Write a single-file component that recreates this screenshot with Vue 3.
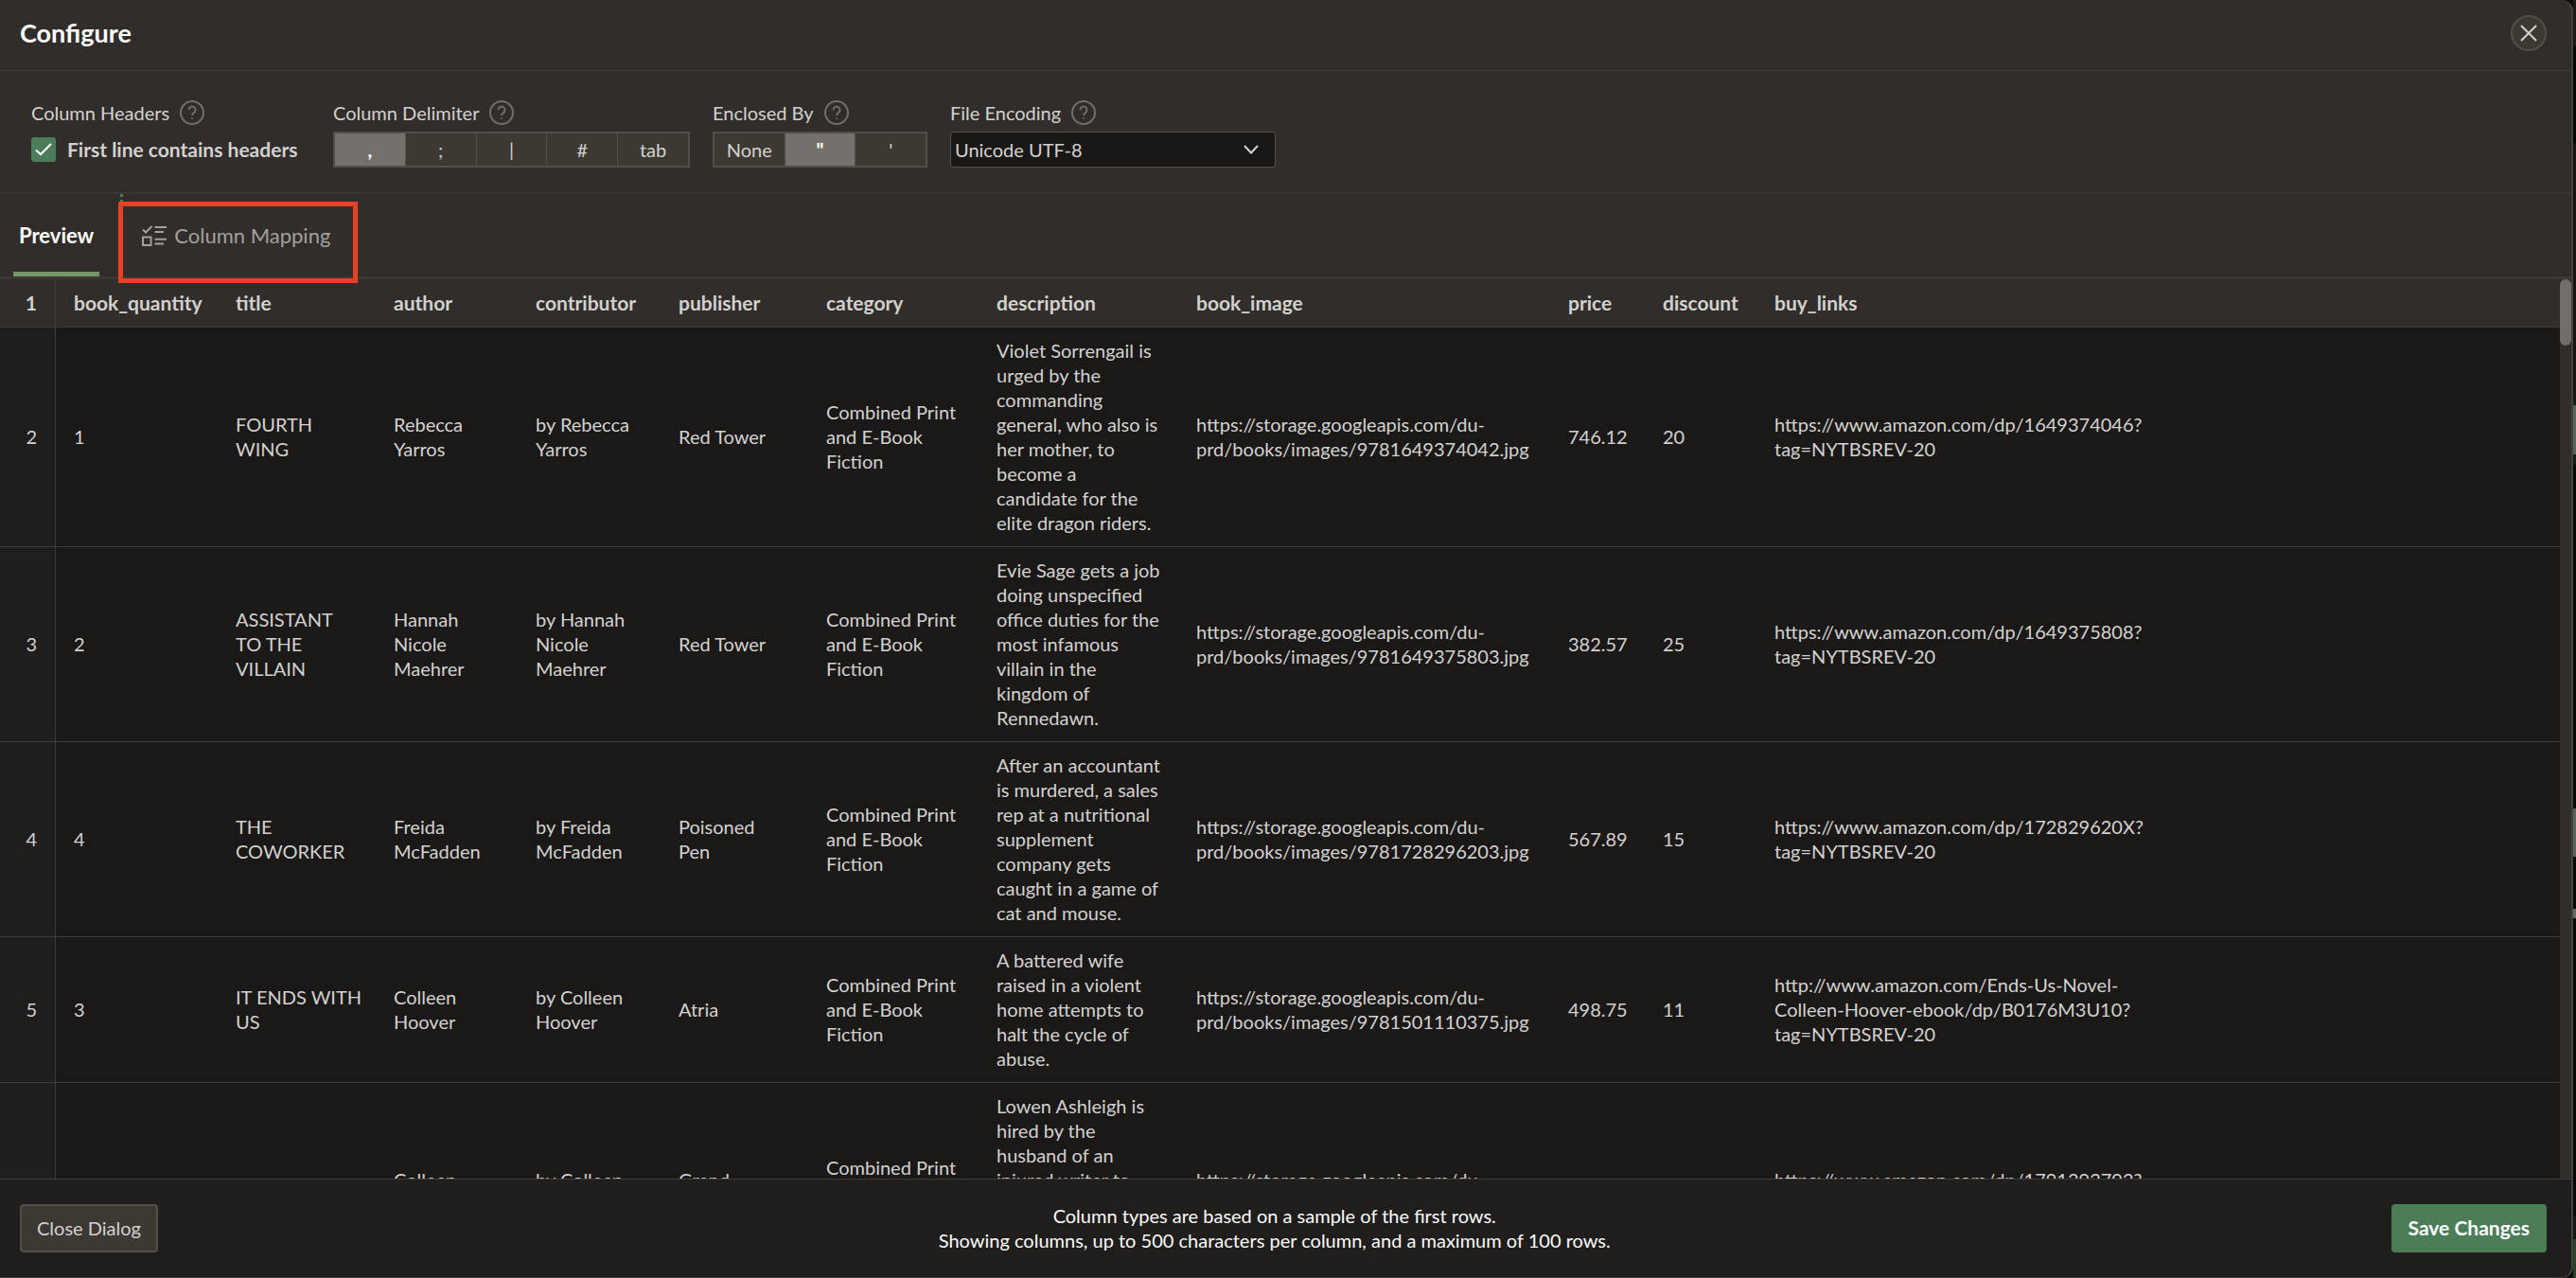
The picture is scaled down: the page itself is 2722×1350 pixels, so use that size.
<script setup>
import { ref } from 'vue'

const hasHeaders = ref(true)
const delimiter = ref(',')
const enclosure = ref('"')
const encoding = ref('Unicode UTF-8')

const delimiters = [',', ';', '|', '#', 'tab']
const enclosures = ['None', '"', "'"]

const columns = [
  'book_quantity', 'title', 'author', 'contributor', 'publisher', 'category',
  'description', 'book_image', 'price', 'discount', 'buy_links'
]

const category = 'Combined Print\nand E-Book\nFiction'
const image = id => `https://storage.googleapis.com/du-\nprd/books/images/${id}.jpg`
const amazon = id => `https://www.amazon.com/dp/${id}?\ntag=NYTBSREV-20`

const rows = [
  ['1', 'FOURTH\nWING', 'Rebecca\nYarros', 'by Rebecca\nYarros', 'Red Tower', category,
    'Violet Sorrengail is\nurged by the\ncommanding\ngeneral, who also is\nher mother, to\nbecome a\ncandidate for the\nelite dragon riders.',
    image('9781649374042'), '746.12', '20', amazon('1649374046')],
  ['2', 'ASSISTANT\nTO THE\nVILLAIN', 'Hannah\nNicole\nMaehrer', 'by Hannah\nNicole\nMaehrer', 'Red Tower', category,
    'Evie Sage gets a job\ndoing unspecified\noffice duties for the\nmost infamous\nvillain in the\nkingdom of\nRennedawn.',
    image('9781649375803'), '382.57', '25', amazon('1649375808')],
  ['4', 'THE\nCOWORKER', 'Freida\nMcFadden', 'by Freida\nMcFadden', 'Poisoned\nPen', category,
    'After an accountant\nis murdered, a sales\nrep at a nutritional\nsupplement\ncompany gets\ncaught in a game of\ncat and mouse.',
    image('9781728296203'), '567.89', '15', amazon('172829620X')],
  ['3', 'IT ENDS WITH\nUS', 'Colleen\nHoover', 'by Colleen\nHoover', 'Atria', category,
    'A battered wife\nraised in a violent\nhome attempts to\nhalt the cycle of\nabuse.',
    image('9781501110375'), '498.75', '11',
    'http://www.amazon.com/Ends-Us-Novel-\nColleen-Hoover-ebook/dp/B0176M3U10?\ntag=NYTBSREV-20'],
  ['5', 'VERITY', 'Colleen\nHoover', 'by Colleen\nHoover', 'Grand\nCentral', category,
    'Lowen Ashleigh is\nhired by the\nhusband of an\ninjured writer to\ntake over her\npopular series and\nuncovers a\nhorrifying truth.',
    image('9781791392796'), '459.20', '10', amazon('1791392792')]
]
</script>

<template>
  <div class="page">
    <main class="dialog" role="dialog" aria-labelledby="dialog-title">
      <header class="titlebar">
        <h1 id="dialog-title">Configure</h1>
        <button class="close" type="button" aria-label="Close">
          <svg width="18" height="18" viewBox="0 0 18 18"><path d="M1 1l16 16M17 1L1 17" /></svg>
        </button>
      </header>

      <section class="settings">
        <div class="group headers">
          <div class="label">
            <span>Column Headers</span>
            <button class="help" type="button" aria-label="Help: Column Headers">
              <svg viewBox="0 0 26 26"><circle cx="13" cy="13" r="12" /><path d="M9.500 10.200a3.500 3.500 0 1 1 5.600 2.700c-1.400 1-2.100 1.500-2.100 3.100" /><path d="M13 18.200v1.600" /></svg>
            </button>
          </div>
          <div class="check">
            <span class="box">
              <input id="has-headers" v-model="hasHeaders" type="checkbox">
              <svg v-if="hasHeaders" width="26" height="26" viewBox="0 0 26 26"><path d="M5 13.500l5 4.500L21 7" /></svg>
            </span>
            <label for="has-headers">First line contains headers</label>
          </div>
        </div>

        <div class="group">
          <div class="label">
            <span>Column Delimiter</span>
            <button class="help" type="button" aria-label="Help: Column Delimiter">
              <svg viewBox="0 0 26 26"><circle cx="13" cy="13" r="12" /><path d="M9.500 10.200a3.500 3.500 0 1 1 5.600 2.700c-1.400 1-2.100 1.500-2.100 3.100" /><path d="M13 18.200v1.600" /></svg>
            </button>
          </div>
          <div class="segments five" role="radiogroup" aria-label="Column Delimiter">
            <label v-for="d in delimiters" :key="d" :class="{ on: d === delimiter }">
              <input v-model="delimiter" type="radio" name="delimiter" :value="d">{{ d }}
            </label>
          </div>
        </div>

        <div class="group">
          <div class="label">
            <span>Enclosed By</span>
            <button class="help" type="button" aria-label="Help: Enclosed By">
              <svg viewBox="0 0 26 26"><circle cx="13" cy="13" r="12" /><path d="M9.500 10.200a3.500 3.500 0 1 1 5.600 2.700c-1.400 1-2.100 1.500-2.100 3.100" /><path d="M13 18.200v1.600" /></svg>
            </button>
          </div>
          <div class="segments three" role="radiogroup" aria-label="Enclosed By">
            <label v-for="e in enclosures" :key="e" :class="{ on: e === enclosure }">
              <input v-model="enclosure" type="radio" name="enclosure" :value="e">{{ e }}
            </label>
          </div>
        </div>

        <div class="group">
          <div class="label">
            <label for="encoding">File Encoding</label>
            <button class="help" type="button" aria-label="Help: File Encoding">
              <svg viewBox="0 0 26 26"><circle cx="13" cy="13" r="12" /><path d="M9.500 10.200a3.500 3.500 0 1 1 5.600 2.700c-1.400 1-2.100 1.500-2.100 3.100" /><path d="M13 18.200v1.600" /></svg>
            </button>
          </div>
          <div class="select">
            <select id="encoding" v-model="encoding">
              <option>Unicode UTF-8</option>
            </select>
            <svg width="16" height="10" viewBox="0 0 16 10"><path d="M1 1l7 7.500L15 1" /></svg>
          </div>
        </div>
      </section>

      <nav class="tabs" role="tablist">
        <button class="tab active" type="button" role="tab" aria-selected="true">Preview</button>
        <button class="tab mapping" type="button" role="tab" aria-selected="false">
          <svg width="26" height="22" viewBox="0 0 26 22">
            <path d="M1 4.500l3 3L10.500 1" />
            <path d="M1 12.500h8.500v8.500H1z" />
            <path d="M13.500 2H26M13.500 7H23M13.500 14.800H26M13.500 19.500H23" />
          </svg>
          <span>Column Mapping</span>
          <i class="marker"></i>
          <i class="highlight"></i>
        </button>
      </nav>

      <section class="preview">
        <div class="scroller">
          <table>
            <colgroup>
              <col v-for="n in 12" :key="n" :class="'c' + n">
            </colgroup>
            <thead>
              <tr>
                <th class="num" scope="col">1</th>
                <th v-for="c in columns" :key="c" scope="col">{{ c }}</th>
              </tr>
            </thead>
            <tbody>
              <tr v-for="(row, i) in rows" :key="i">
                <td class="num">{{ i + 2 }}</td>
                <td v-for="(cell, j) in row" :key="j">{{ cell }}</td>
              </tr>
            </tbody>
          </table>
        </div>
        <div class="track"><div class="thumb"></div></div>
      </section>

      <footer class="footer">
        <button class="btn" type="button">Close Dialog</button>
        <p>Column types are based on a sample of the first rows.<br>Showing columns, up to 500 characters per column, and a maximum of 100 rows.</p>
        <button class="btn primary" type="button">Save Changes</button>
      </footer>
    </main>
    <div class="backdrop"></div>
  </div>
</template>

<style>
body {
  margin: 0;
  background: #0d0c0b;
}
</style>

<style scoped>
.page {
  display: flex;
  height: 100vh;
  overflow: hidden;
  font-family: Lato, "Noto Sans", sans-serif;
  font-size: 20px;
  line-height: 26px;
  color: #d3d1cf;
}

.page * {
  box-sizing: border-box;
}

button,
select,
input {
  margin: 0;
  padding: 0;
  border: 0;
  background: none;
  font: inherit;
  color: inherit;
}

svg {
  display: block;
  fill: none;
  stroke: currentColor;
}

.dialog {
  flex: 1;
  min-width: 0;
  display: flex;
  flex-direction: column;
  border-right: 2px solid #45413d;
  border-bottom: 1px solid #45413d;
  border-radius: 0 12px 12px 0;
  background: #312d2a;
  overflow: hidden;
}

.backdrop {
  width: 3px;
  background: linear-gradient(
    #1a1918 49px, #050505 49px 151px, #161514 151px 416px, #121b22 416px 428px,
    #53655a 428px 480px, #121b22 480px 491px, #080808 491px 854px, #53655a 854px 905px,
    #080808 905px 960px, #686868 960px 970px, #080808 970px 1284px, #161514 1284px 1309px,
    #24422e 1309px
  );
}

/* Title bar */
.titlebar {
  display: flex;
  align-items: center;
  justify-content: space-between;
  padding: 16px 26px 20px 21px;
  border-bottom: 1px solid #3e3a37;
}

h1 {
  margin: 0;
  font-size: 27px;
  line-height: 38px;
  font-weight: 700;
  color: #fff;
}

.close {
  display: grid;
  place-items: center;
  width: 38px;
  height: 38px;
  border: 2px solid #524e49;
  border-radius: 50%;
  background: #3c3933;
  stroke-width: 2;
}

/* Settings */
.settings {
  display: flex;
  gap: 24px;
  padding: 31px 33px 26px;
  border-bottom: 1px solid #3e3a37;
}

.headers {
  width: 295px;
}

.label {
  display: flex;
  align-items: center;
  gap: 11px;
  height: 26px;
  margin-bottom: 7px;
}

.help {
  width: 26px;
  height: 26px;
  color: #736e69;
}

.help svg {
  stroke-width: 2;
}

.check {
  display: flex;
  align-items: center;
  gap: 12px;
  height: 38px;
  font-size: 21px;
  font-weight: 700;
}

.box {
  position: relative;
  width: 26px;
  height: 26px;
}

.box input {
  display: block;
  appearance: none;
  width: 26px;
  height: 26px;
  border-radius: 3px;
  background: #4b7d58;
}

.box svg {
  position: absolute;
  inset: 0;
  color: #fff;
  stroke-width: 2;
  pointer-events: none;
}

.segments {
  display: flex;
  border: 2px solid #524e49;
}

.segments.five {
  width: 377px;
}

.segments.three {
  width: 227px;
}

.segments label {
  position: relative;
  flex: 1;
  height: 34px;
  line-height: 34px;
  text-align: center;
  background: #3c3933;
}

.segments label + label {
  border-left: 1px solid #524e49;
}

.segments label.on {
  background: #75706b;
  font-weight: 700;
  color: #fff;
}

.segments input {
  position: absolute;
  inset: 0;
  appearance: none;
}

.select {
  position: relative;
  width: 344px;
}

.select select {
  display: block;
  appearance: none;
  width: 100%;
  height: 38px;
  padding: 0 40px 0 4px;
  border: 1px solid #55514c;
  border-radius: 3px;
  background: #1a1816;
}

.select svg {
  position: absolute;
  top: 14px;
  right: 18px;
  stroke-width: 2;
  pointer-events: none;
}

/* Tabs */
.tabs {
  display: flex;
  gap: 22px;
  height: 91px;
  padding-left: 14px;
  border-bottom: 3px solid #3b3734;
}

.tab {
  position: relative;
  display: flex;
  align-items: center;
  font-size: 22px;
  color: #a3a09d;
}

.tab.active {
  padding: 7px 6px 0;
  border-bottom: 5px solid #759468;
  font-weight: 700;
  color: #fff;
}

.mapping {
  gap: 8px;
  padding: 2px 29px 0 23px;
}

.mapping svg {
  stroke-width: 2;
}

.highlight {
  position: absolute;
  inset: 9px 0 -7px -2px;
  border: 5px solid #ea4025;
}

.marker {
  position: absolute;
  top: 1px;
  left: 0;
  height: 9px;
  border-left: 3px dotted #4b7d58;
}

/* Preview table */
.preview {
  flex: 1;
  min-height: 0;
  display: flex;
  background: #1a1917;
}

.scroller {
  flex: 1;
  min-width: 0;
  overflow: hidden;
}

table {
  width: 100%;
  table-layout: fixed;
  border-collapse: separate;
  border-spacing: 0;
}

.c1 { width: 59px; }
.c2 { width: 171px; }
.c3 { width: 167px; }
.c4 { width: 150px; }
.c5 { width: 151px; }
.c6 { width: 156px; }
.c7 { width: 180px; }
.c8 { width: 211px; }
.c9 { width: 393px; }
.c10 { width: 100px; }
.c11 { width: 118px; }

th,
td {
  padding: 11px 0 12px 19px;
  border-bottom: 1px solid #3f3b38;
  text-align: left;
  vertical-align: middle;
  white-space: pre;
}

th {
  height: 51px;
  background: #312d2a;
  font-size: 21px;
  font-weight: 700;
}

.num {
  padding-left: 0;
  padding-right: 19px;
  border-right: 1px solid #3f3b38;
  text-align: right;
}

td.num {
  background: #201e1c;
}

.track {
  width: 12px;
  background: #312d2a;
}

.thumb {
  height: 70px;
  border-radius: 6px;
  background: #726e6a;
}

/* Footer */
.footer {
  display: flex;
  align-items: center;
  justify-content: space-between;
  padding: 25px 26px 26px 21px;
  border-top: 1px solid #3f3b38;
  background: #201e1c;
}

.footer p {
  margin: 0;
  text-align: center;
  color: #fcfbfa;
}

.btn {
  height: 51px;
  padding: 0 16px;
  border: 2px solid #524e49;
  border-radius: 4px;
  background: #3c3933;
}

.btn.primary {
  border-color: #4b7d58;
  background: #4b7d58;
  font-size: 21px;
  font-weight: 700;
  color: #fff;
}
</style>
